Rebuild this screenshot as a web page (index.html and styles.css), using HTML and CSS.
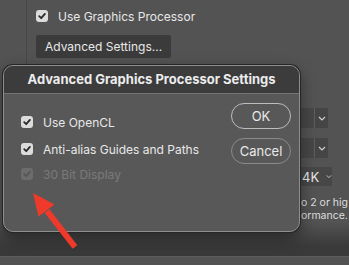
FILE: index.html
```html
<!DOCTYPE html>
<html lang="en">
<head>
<meta charset="UTF-8" />
<title>Advanced Graphics Processor Settings</title>
<link rel="stylesheet" href="styles.css">
</head>
<body>

<div class="prefs">
  <div class="prefs-main">
    <div class="rail"></div>
    <div class="gpu">
      <label class="check">
        <span class="box"><svg viewBox="0 0 12 12"><path d="M3.2 6.2 L5.2 8.2 L8.9 3.9" /></svg></span>
        Use Graphics Processor
      </label>
      <button class="adv-btn">Advanced Settings...</button>
    </div>
    <div class="side">
      <div class="select"><span class="select-body"></span><span class="select-arrow"><svg viewBox="0 0 8 5"><path d="M1 1 L4 4 L7 1" /></svg></span></div>
      <div class="select"><span class="select-body"></span><span class="select-arrow"><svg viewBox="0 0 8 5"><path d="M1 1 L4 4 L7 1" /></svg></span></div>
      <div class="select wide"><span class="select-text">4K</span><svg class="chev" viewBox="0 0 8 5"><path d="M1 1 L4 4 L7 1" /></svg></div>
      <p class="hint">o 2 or hig</p>
      <p class="hint">ormance.</p>
    </div>
  </div>
  <div class="footer"></div>
</div>

<div class="dialog">
  <div class="dialog-title">Advanced Graphics Processor Settings</div>
  <div class="dialog-body">
    <div class="options">
      <label class="check opt">
        <span class="box"><svg viewBox="0 0 12 12"><path d="M3.2 6.2 L5.2 8.2 L8.9 3.9" /></svg></span>
        Use OpenCL
      </label>
      <label class="check opt">
        <span class="box"><svg viewBox="0 0 12 12"><path d="M3.2 6.2 L5.2 8.2 L8.9 3.9" /></svg></span>
        Anti-alias Guides and Paths
      </label>
      <label class="check opt disabled">
        <span class="box"><svg viewBox="0 0 12 12"><path d="M3.2 6.2 L5.2 8.2 L8.9 3.9" /></svg></span>
        30 Bit Display
      </label>
    </div>
    <div class="actions">
      <button class="pill primary">OK</button>
      <button class="pill">Cancel</button>
    </div>
  </div>
</div>

<!-- red annotation arrow -->
<svg class="arrow" width="349" height="265" viewBox="0 0 349 265">
  <line x1="75" y1="247" x2="47" y2="211" />
  <polygon points="33,193 54.5,204.5 38.5,216.5" />
</svg>

</body>
</html>
```

FILE: styles.css
```css
* {
  box-sizing: border-box;
}
body {
  margin: 0;
  width: 349px;
  height: 265px;
  overflow: hidden;
  position: relative;
  background: #535353;
  font-family: Inter, "Noto Sans", sans-serif;
  font-size: 12px;
  color: #e8e8e8;
}
.prefs {
  height: 265px;
  display: flex;
  flex-direction: column;
}
.prefs-main {
  flex: 1;
  display: flex;
}
.rail {
  flex: none;
  width: 27px;
  border-right: 1px solid #484848;
  height: 66px;
}
.gpu {
  flex: none;
  width: 273px;
  padding: 10px 0 0 9px;
}
.check {
  display: flex;
  align-items: center;
  gap: 10px;
  height: 12px;
  white-space: nowrap;
}
.box {
  flex: none;
  width: 12px;
  height: 12px;
  border-radius: 3px;
  background: #dcdcdc;
  display: flex;
}
.box svg {
  width: 12px;
  height: 12px;
  fill: none;
  stroke: #2b2b2b;
  stroke-width: 1.8;
  stroke-linecap: round;
  stroke-linejoin: round;
}
.adv-btn {
  margin-top: 13px;
  display: block;
  width: 135px;
  height: 23px;
  padding: 0 0 0 9px;
  text-align: left;
  white-space: nowrap;
  border: none;
  border-radius: 2px;
  background: #3b3b3b;
  color: #e8e8e8;
  font-family: inherit;
  font-size: 12px;
}
.side {
  flex: 1;
  min-width: 0;
  overflow: hidden;
  padding-top: 108px;
}
.select {
  display: flex;
  height: 20px;
  margin-bottom: 10px;
}
.select-body {
  width: 14px;
  background: #474747;
}
.select-arrow {
  width: 14px;
  background: #454545;
  border-left: 1px solid #5e5e5e;
  display: flex;
  align-items: center;
  justify-content: center;
}
.select svg {
  width: 8px;
  height: 5px;
  fill: none;
  stroke: #cfcfcf;
  stroke-width: 1.2;
}
.select.wide {
  width: 32px;
  height: 19px;
  background: #474747;
  align-items: center;
  margin-top: -1px;
  margin-bottom: 0;
}
.select-text {
  padding-left: 2px;
  font-size: 13px;
}
.select .chev {
  margin-left: 7px;
}
.hint {
  margin: 0 0 0 1px;
  font-size: 10.5px;
  line-height: 13px;
  white-space: nowrap;
  color: #dedede;
}
.select.wide + .hint {
  margin-top: 10px;
}
.footer {
  height: 39px;
  background: linear-gradient(#535353, #3a3a3a 70%, #393939);
  border-bottom: 1px solid #5c5c5c;
  margin-bottom: 8px;
}
.dialog {
  position: absolute;
  left: 3px;
  top: 65px;
  width: 297px;
  height: 167px;
  border: 1px solid #8e8e8e;
  border-radius: 10px;
  overflow: hidden;
  background: #585858;
  box-shadow: 0 0 0 1px #262626, 0 6px 16px rgba(0,0,0,0.45);
}
.dialog-title {
  height: 28px;
  line-height: 26px;
  background: #3c3c3c;
  border-bottom: 1px solid #747474;
  text-align: center;
  font-size: 13px;
  font-weight: 700;
  color: #ececec;
}
.dialog-body {
  display: flex;
  justify-content: space-between;
  padding: 9px 8px 0 17px;
}
.options {
  padding-top: 13px;
}
.opt {
  margin-bottom: 15px;
}
.opt + .opt.disabled {
  margin-top: -2px;
}
.disabled {
  color: #7a7a7a;
}
.disabled .box {
  background: #6c6c6c;
}
.disabled .box svg {
  stroke: #575757;
}
.actions {
  display: flex;
  flex-direction: column;
  gap: 9px;
}
.pill {
  width: 60px;
  height: 26px;
  border-radius: 13px;
  border: 1px solid #8a8a8a;
  background: transparent;
  color: #e8e8e8;
  font-family: inherit;
  font-size: 13px;
}
.pill.primary {
  border-color: #bdbdbd;
}
.arrow {
  position: absolute;
  left: 0;
  top: 0;
  filter: blur(0.6px);
}
.arrow line {
  stroke: #ef3a2b;
  stroke-width: 6;
}
.arrow polygon {
  fill: #ef3a2b;
}
```
